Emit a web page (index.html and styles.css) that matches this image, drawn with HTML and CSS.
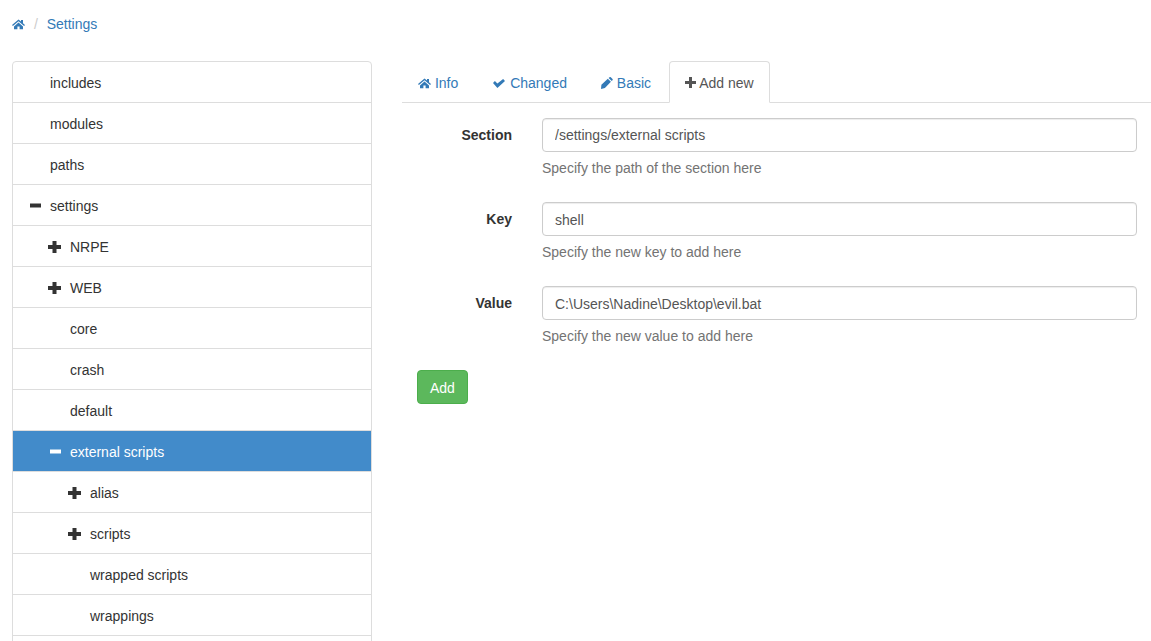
FILE: index.html
```html
<!DOCTYPE html>
<html>
<head>
    <title>Settings</title>
    <link rel="stylesheet" href="styles.css">
</head>
<body>
    <!-- icon set -->
    <svg class="defs" width="0" height="0">
        <symbol id="i-home" viewBox="0 0 14 14"><path d="M6.5 2.5 0 8l.9 1 5.6-4.7L12.1 9l.9-1-2-1.7V3H9v1.6zM2 9.5l4.5-3.9L11 9.5v2.8H7.6V9.5H5.4v2.8H2z"/></symbol>
        <symbol id="i-ok" viewBox="0 0 14 14"><path d="M1 7l1.9-1.9 2.5 2.5L11.1 3 13 4.9l-7.6 7z"/></symbol>
        <symbol id="i-pencil" viewBox="0 0 12 14"><path d="m9.8 1.2 1.7 1.7a1 1 0 0 1 0 1.3l-.8.8-3.1-3.1.9-.7a1 1 0 0 1 1.3 0zM6.8 2.7l3.1 3.1-6 6.1-3.9 1 .4-4.1z"/></symbol>
        <symbol id="i-add" viewBox="0 0 11 14"><path d="M4 1h3v4h4v3H7v4H4V8H0V5h4z"/></symbol>
        <symbol id="i-plus" viewBox="0 0 14 14"><path d="M4.5 1h4v4H13v4H8.5v4h-4V9H0V5h4.5z"/></symbol>
        <symbol id="i-minus" viewBox="0 0 14 14"><path d="M2 4.5h11v4H2z"/></symbol>
    </svg>

    <!-- breadcrumb -->
    <div class="breadcrumb">
        <a href="#"><svg class="icon"><use href="#i-home"/></svg></a>
        <span class="sep">/</span>
        <a href="#">Settings</a>
    </div>

    <div class="main">
        <!-- the settings tree -->
        <ul class="tree">
            <li class="node"><span class="toggle"></span>includes</li>
            <li class="node"><span class="toggle"></span>modules</li>
            <li class="node"><span class="toggle"></span>paths</li>
            <li class="node"><span class="toggle"><svg class="icon"><use href="#i-minus"/></svg></span>settings</li>
            <li class="node"><span class="indent"></span><span class="toggle"><svg class="icon"><use href="#i-plus"/></svg></span>NRPE</li>
            <li class="node"><span class="indent"></span><span class="toggle"><svg class="icon"><use href="#i-plus"/></svg></span>WEB</li>
            <li class="node"><span class="indent"></span><span class="toggle"></span>core</li>
            <li class="node"><span class="indent"></span><span class="toggle"></span>crash</li>
            <li class="node"><span class="indent"></span><span class="toggle"></span>default</li>
            <li class="node active"><span class="indent"></span><span class="toggle"><svg class="icon"><use href="#i-minus"/></svg></span>external scripts</li>
            <li class="node"><span class="indent"></span><span class="indent"></span><span class="toggle"><svg class="icon"><use href="#i-plus"/></svg></span>alias</li>
            <li class="node"><span class="indent"></span><span class="indent"></span><span class="toggle"><svg class="icon"><use href="#i-plus"/></svg></span>scripts</li>
            <li class="node"><span class="indent"></span><span class="indent"></span><span class="toggle"></span>wrapped scripts</li>
            <li class="node"><span class="indent"></span><span class="indent"></span><span class="toggle"></span>wrappings</li>
            <li class="node"></li>
        </ul>

        <div class="content">
            <!-- tabs -->
            <ul class="tabs">
                <li class="tab"><a href="#"><svg class="icon home"><use href="#i-home"/></svg> Info</a></li>
                <li class="tab"><a href="#"><svg class="icon"><use href="#i-ok"/></svg> Changed</a></li>
                <li class="tab"><a href="#"><svg class="icon pencil"><use href="#i-pencil"/></svg> Basic</a></li>
                <li class="tab current"><a href="#"><svg class="icon add"><use href="#i-add"/></svg> Add new</a></li>
            </ul>

            <!-- the add new form -->
            <form class="form">
                <div class="field">
                    <label class="field-label">Section</label>
                    <div class="field-body">
                        <input class="input" type="text" value="/settings/external scripts">
                        <p class="help">Specify the path of the section here</p>
                    </div>
                </div>
                <div class="field">
                    <label class="field-label">Key</label>
                    <div class="field-body">
                        <input class="input low" type="text" value="shell">
                        <p class="help">Specify the new key to add here</p>
                    </div>
                </div>
                <div class="field">
                    <label class="field-label">Value</label>
                    <div class="field-body">
                        <input class="input low" type="text" value="C:\Users\Nadine\Desktop\evil.bat">
                        <p class="help">Specify the new value to add here</p>
                    </div>
                </div>
                <button class="btn" type="button">Add</button>
            </form>
        </div>
    </div>
</body>
</html>
```

FILE: styles.css
```css
/* Page */
html, body {
    height: 641px;
    overflow: hidden;
}

body {
    margin: 0;
    padding: 0 0 0 12px;
    font-family: "Liberation Sans", Arial, sans-serif;
    font-size: 14px;
    line-height: 20px;
    color: #333;
    background: #fff;
}

a {
    color: #337ab7;
    text-decoration: none;
}

.defs {
    display: block;
}

.icon {
    width: 14px;
    height: 14px;
    fill: currentColor;
    vertical-align: -2px;
}

.icon.home {
    margin-right: -1px;
}

.icon.pencil {
    width: 12px;
}

.icon.add {
    width: 11px;
}

/* Breadcrumb */
.breadcrumb {
    padding-top: 14px;
    height: 20px;
    margin-bottom: 27px;
}

.breadcrumb .sep {
    color: #ccc;
    padding: 0 5px 0 4px;
}

/* Two columns */
.main {
    display: flex;
    gap: 30px;
    align-items: flex-start;
}

/* Tree */
.tree {
    width: 360px;
    flex: none;
    margin: 0;
    padding: 0;
    list-style: none;
}

.node {
    display: flex;
    height: 20px;
    padding: 11px 15px 9px;
    margin-bottom: -1px;
    background: #fff;
    border: 1px solid #ddd;
}

.node:first-child {
    border-top-left-radius: 4px;
    border-top-right-radius: 4px;
}

.node.active {
    color: #fff;
    background: #428bca;
}

.indent {
    width: 20px;
    flex: none;
}

.toggle {
    width: 22px;
    flex: none;
}

/* Tabs */
.content {
    flex: 1;
}

.tabs {
    display: flex;
    height: 41px;
    margin: 0;
    padding: 0;
    list-style: none;
    border-bottom: 1px solid #ddd;
}

.tab {
    height: 42px;
    margin-right: 2px;
}

.tab a {
    display: block;
    height: 20px;
    padding: 11px 15px 9px;
    border: 1px solid transparent;
    border-radius: 4px 4px 0 0;
}

.tab.current a {
    color: #555;
    background: #fff;
    border-color: #ddd;
    border-bottom-color: #fff;
}

/* Form */
.form {
    padding-top: 15px;
}

.field {
    display: flex;
    gap: 30px;
    margin-bottom: 15px;
}

.field-label {
    width: 110px;
    padding-top: 7px;
    text-align: right;
    font-weight: bold;
}

.field-body {
    width: 595px;
}

.input {
    display: block;
    box-sizing: border-box;
    width: 100%;
    height: 34px;
    padding: 6px 12px;
    font: inherit;
    color: #555;
    background: #fff;
    border: 1px solid #ccc;
    border-radius: 4px;
    box-shadow: inset 0 1px 1px rgba(0,0,0,0.075);
}

.input.low {
    padding: 7px 12px 5px;
}

.help {
    margin: 6px 0 9px;
    color: #737373;
}

.btn {
    display: block;
    height: 34px;
    margin-left: 15px;
    padding: 7px 12px 5px;
    font: inherit;
    color: #fff;
    background: #5cb85c;
    border: 1px solid #4cae4c;
    border-radius: 4px;
}
```
